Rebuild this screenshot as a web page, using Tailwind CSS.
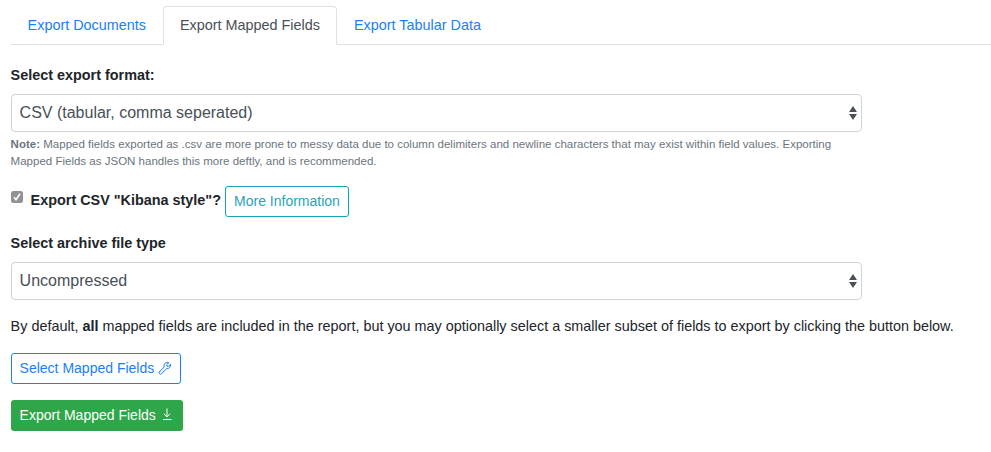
<!DOCTYPE html>
<html lang="en"><head><meta charset="utf-8"><title>Export</title>
<script src="https://cdn.jsdelivr.net/npm/@tailwindcss/browser@4"></script></head>
<body class="bg-white text-[#212529] overflow-hidden font-['Liberation_Sans',Arial,sans-serif] text-[14.4px] leading-[21.6px]">
<main class="pl-[10.6px] pt-1.5">
<nav class="flex h-[39px] border-b border-[#dee2e6] text-[#1a80fa]">
<a class="w-[152px] pl-[17px] pt-[9px]">Export Documents</a>
<a class="w-[174px] h-[39px] shrink-0 pl-[16.4px] pt-2 rounded-t border border-[#dee2e6] border-b-white bg-white text-[#495057]">Export Mapped Fields</a>
<a class="pl-[17.4px] pt-[9px]">Export Tabular Data</a>
</nav>
<label class="block mt-5 font-bold">Select export format:</label>
<div class="mt-[7px] w-[851px] h-[38px] rounded border border-[#ced4da] flex items-center justify-between pl-2 pr-1 text-base text-[#495057]"><span>CSV (tabular, comma seperated)</span>
<svg class="w-2 h-4" viewBox="0 0 8 16" fill="#495057"><path d="M0 7 4 1l4 6zM0 9h8l-4 6z"/></svg></div>
<p class="mt-1 w-[851px] text-[11.52px] leading-[17.28px] text-[#6c757d]"><b>Note:</b> Mapped fields exported as .csv are more prone to messy data due to column delimiters and newline characters that may exist within field values. Exporting<br>Mapped Fields as JSON handles this more deftly, and is recommended.</p>
<div class="mt-4 flex h-[31px] items-center"><svg class="w-3 h-3 mb-2.5" viewBox="0 0 12 12"><rect width="12" height="12" rx="2.5" fill="#919196"/><path d="m3 6.3 2 2.4 4-6" stroke="#fff" stroke-width="1.6" fill="none"/></svg>
<label class="ml-2 pb-px font-bold">Export CSV "Kibana style"?</label><button class="ml-1 h-[31px] w-[124px] rounded-[3px] border border-[#17a2b8] text-[#2ba3b7] text-[14px]">More Information</button></div>
<label class="block mt-4 font-bold">Select archive file type</label>
<div class="mt-[7px] w-[851px] h-[38px] rounded border border-[#ced4da] flex items-center justify-between pl-2 pr-1 text-base text-[#495057]"><span>Uncompressed</span>
<svg class="w-2 h-4" viewBox="0 0 8 16" fill="#495057"><path d="M0 7 4 1l4 6zM0 9h8l-4 6z"/></svg></div>
<p class="mt-4">By default, <b>all</b> mapped fields are included in the report, but you may optionally select a smaller subset of fields to export by clicking the button below.</p>
<button class="mt-4 flex h-[31px] w-[170px] items-center pl-2 gap-1 rounded-[3px] border border-[#1a80fa] text-[#1a80fa] text-[14px]">Select Mapped Fields
<svg class="w-[14px] h-[14px] mb-0.5" viewBox="0 0 14 14" fill="none" stroke="currentColor" stroke-linejoin="round" stroke-linecap="round"><path d="M1.5 10.7 6.2 6C5.5 4 6.6 1.8 9 1.4c.6-.1 1.3 0 1.8.2L8.7 3.7l.2 1.5 1.5.2 2.1-2.1c.5 2.4-1.3 4.7-4 4.4L3.6 12.8a1.45 1.45 0 0 1-2.1-2.1Z"/></svg></button>
<button class="mt-4 flex h-[31px] w-[172px] items-center pl-[9px] gap-1 rounded-[3px] bg-[#2fa64a] text-white text-[14px]">Export Mapped Fields
<svg class="w-[14px] h-[14px] mb-[3px]" viewBox="0 0 14 14" fill="none" stroke="currentColor"><path d="M7 1.5v8.3M3.8 6.7 7 9.8l3.2-3.1M3 12.5h8.5"/></svg></button>
</main></body></html>
